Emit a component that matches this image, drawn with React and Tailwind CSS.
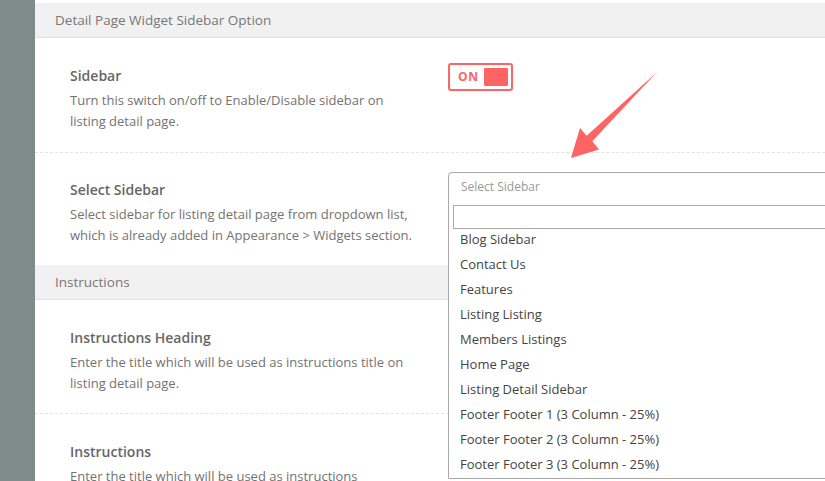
import React from "react";

const font = { fontFamily: "'Open Sans', 'Noto Sans', sans-serif" };

function Row({ title, lines, pt = "pt-[28px]", pb = "pb-[20px]", border = true, right }) {
  return (
    <div className={`flex ${pt} ${pb} pl-[35px] ${border ? "border-b border-dashed border-[#e3e3e3]" : ""}`}>
      <div className="w-[378px] shrink-0">
        <div className="text-[14px] leading-[20px] font-semibold text-[#666]">{title}</div>
        <div className="mt-[4px] text-[13px] leading-[21px] text-[#737373]">
          {lines.map((l, i) => (
            <div key={i}>{l}</div>
          ))}
        </div>
      </div>
      <div className="flex-1">{right}</div>
    </div>
  );
}

function Header({ children }) {
  return (
    <div className="h-[35px] bg-[#f1f1f1] border-b border-[#e2e2e2] pl-[20px] flex items-center text-[13.5px] text-[#777]">
      {children}
    </div>
  );
}

const options = [
  "Blog Sidebar",
  "Contact Us",
  "Features",
  "Listing Listing",
  "Members Listings",
  "Home Page",
  "Listing Detail Sidebar",
  "Footer Footer 1 (3 Column - 25%)",
  "Footer Footer 2 (3 Column - 25%)",
  "Footer Footer 3 (3 Column - 25%)",
];

export default function App() {
  return (
    <div className="relative flex w-[825px] h-[481px] overflow-hidden bg-white" style={font}>
      <div className="w-[35px] shrink-0 bg-[#7e8b8b]" />
      <div className="relative flex-1 pt-[3px]">
        <Header>Detail Page Widget Sidebar Option</Header>
        <Row
          title="Sidebar"
          lines={["Turn this switch on/off to Enable/Disable sidebar on", "listing detail page."]}
          right={
            <div className="mt-[-3px] w-[65px] h-[28px] border-2 border-[#ff6464] rounded-[3px] flex items-center justify-between pl-[8px] pr-[3px]">
              <span className="text-[12px] font-bold tracking-[0.8px] text-[#ff6464]">ON</span>
              <span className="w-[24px] h-[18px] bg-[#ff6464] rounded-[1px]" />
            </div>
          }
        />
        <Row
          title="Select Sidebar"
          pt="pt-[27px]"
          pb="pb-[19px]"
          border={false}
          lines={[
            "Select sidebar for listing detail page from dropdown list,",
            "which is already added in Appearance > Widgets section.",
          ]}
        />
        <Header>Instructions</Header>
        <Row
          title="Instructions Heading"
          pb="pb-[19px]"
          lines={["Enter the title which will be used as instructions title on", "listing detail page."]}
        />
        <Row
          title="Instructions"
          border={false}
          lines={["Enter the title which will be used as instructions", "description on listing detail page."]}
        />

        <div className="absolute left-[413px] top-[172px] w-[420px] h-[307px] bg-white border border-[#aaa] rounded-tl-[4px]">
          <div className="h-[28px] pl-[12px] flex items-center text-[12px] text-[#999]">Select Sidebar</div>
          <div className="pl-[4px] pt-[4px]">
            <div className="h-[24px] border border-[#aaa] bg-white" />
          </div>
          <div className="mt-[-2px]">
            {options.map((o) => (
              <div key={o} className="h-[25px] leading-[25px] pl-[11px] text-[13px] text-[#444] whitespace-nowrap">
                {o}
              </div>
            ))}
          </div>
        </div>
      </div>

      <svg className="absolute left-0 top-0 pointer-events-none" width="825" height="481" viewBox="0 0 825 481">
        <polygon
          points="657.5,71.5 592.3,141.3 599,149.5 571,158 580,128 586.7,135.7 656.5,72.5"
          fill="#ff6464"
        />
      </svg>
    </div>
  );
}
